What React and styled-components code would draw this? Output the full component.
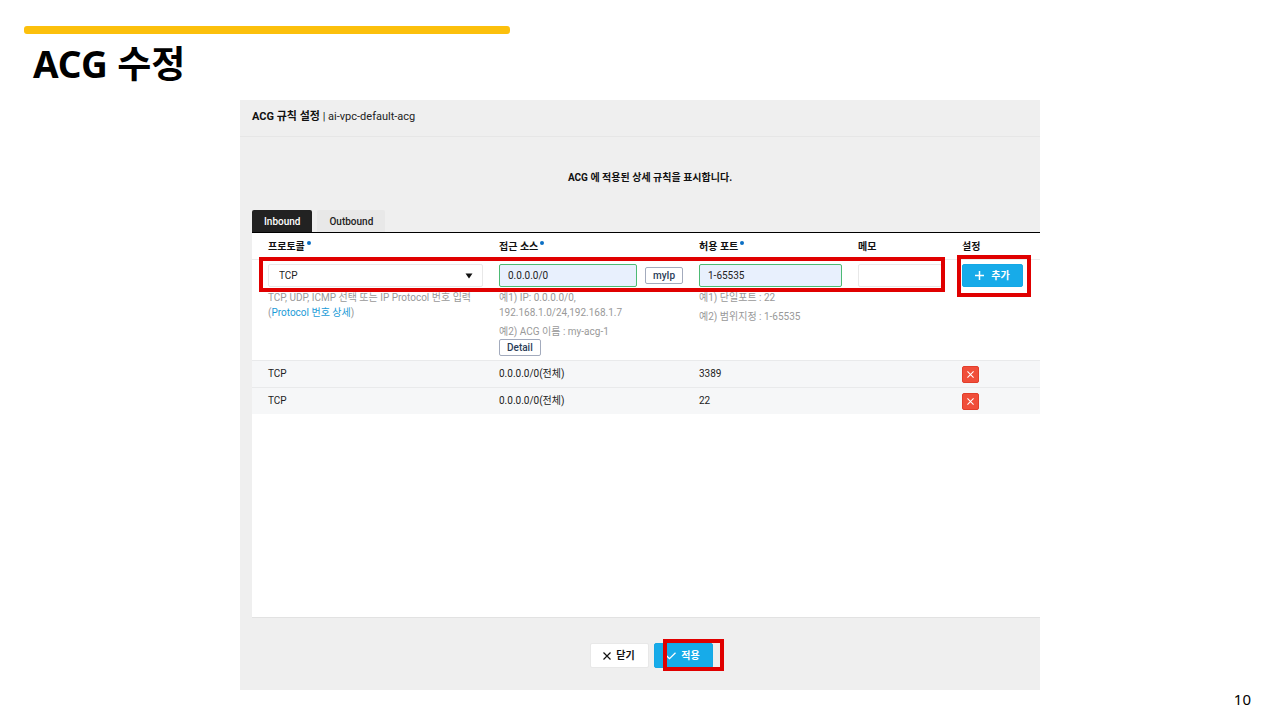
import React, { useState } from 'react';
import styled, { createGlobalStyle, css } from 'styled-components';

const GlobalStyle = createGlobalStyle`
  * {
    box-sizing: border-box;
  }

  body {
    margin: 0;
    background: #fff;
    color: #222;
    font-family: Roboto, 'Noto Sans CJK KR', sans-serif;
    font-size: 10px;
    line-height: 15px;
  }

  button,
  input,
  select {
    font: inherit;
    color: inherit;
    margin: 0;
  }
`;

const Slide = styled.main`
  display: flex;
  flex-direction: column;
  min-height: 100vh;
  padding: 26px 24px 12px;
`;

const Accent = styled.div`
  width: 38%;
  min-width: 486px;
  height: 8px;
  border-radius: 3px;
  background: #fcc00c;
`;

const SlideTitle = styled.h1`
  margin: 4px 0 0 9px;
  font-family: 'Noto Sans', 'Noto Sans CJK KR', sans-serif;
  font-size: 37px;
  font-weight: 700;
  line-height: 52px;
  color: #000;
`;

const PageNumber = styled.footer`
  margin-top: auto;
  padding-right: 5px;
  font-family: 'Noto Sans', sans-serif;
  font-size: 15px;
  line-height: 18px;
  text-align: right;
  color: #000;
`;

const Panel = styled.section`
  width: 65%;
  min-width: 800px;
  max-width: 800px;
  margin: 10px auto 0;
  background: #efefef;
`;

const PanelHeader = styled.header`
  padding: 9px 12px 11px;
  border-bottom: 1px solid #e6e6e6;
  font-size: 11px;
  line-height: 16px;
`;

const PanelTitle = styled.h2`
  display: inline;
  margin: 0;
  font-size: 11px;
  font-weight: 700;
  color: #111;
`;

const Notice = styled.p`
  margin: 0;
  padding: 33px 0 25px 20px;
  font-weight: 700;
  text-align: center;
  color: #111;
`;

const Tabs = styled.div`
  display: flex;
  gap: 5px;
  padding-left: 12px;
`;

const Tab = styled.button`
  height: 22px;
  padding: 0 12px;
  border: 0;
  border-radius: 2px 2px 0 0;
  font-weight: 500;
  background: ${props => (props.$active ? '#222' : '#e8e8e8')};
  color: ${props => (props.$active ? '#fff' : '#222')};
`;

const Rules = styled.div`
  min-height: 386px;
  margin-left: 12px;
  border-top: 1px solid #000;
  border-bottom: 1px solid #e2e2e2;
  background: #fff;
`;

const Table = styled.table`
  width: 100%;
  table-layout: fixed;
  border-collapse: separate;
  border-spacing: 0;
`;

const HeadCell = styled.th`
  width: ${props => props.$width}px;
  height: 27px;
  padding: 0 0 0 16px;
  border-bottom: 1px solid #ececec;
  font-weight: 700;
  text-align: left;
  color: #111;
`;

const Required = styled.i`
  display: inline-block;
  width: 4px;
  height: 4px;
  margin-left: 2px;
  border-radius: 50%;
  background: #0b6fc4;
  vertical-align: 5px;
`;

const FormRow = styled.tr`
  position: relative;
`;

const FormCell = styled.td`
  padding: 4px ${props => (props.$inset ? 4 : 0)}px 4px 16px;
  vertical-align: top;
`;

const FieldLine = styled.div`
  display: flex;
  align-items: center;
  gap: 8px;
  margin-bottom: 3px;
`;

const field = css`
  flex: 1;
  width: 100%;
  min-width: 0;
  height: 23px;
  border: 1px solid #e8e8e8;
  border-radius: 2px;
  background: #fff;
`;

const Input = styled.input`
  ${field}
  padding: 0 8px;
  ${props => props.$filled && css`
    border-color: #4dba74;
    background: #e8f0fd;
  `}
`;

const SelectBox = styled.div`
  position: relative;
  display: flex;
  flex: 1;
`;

const Select = styled.select`
  ${field}
  padding: 0 10px;
  appearance: none;
`;

const Caret = styled.svg`
  position: absolute;
  top: 9px;
  right: 10px;
  pointer-events: none;
`;

const OutlineButton = styled.button`
  height: 17px;
  padding: 0 7px;
  border: 1px solid #a3abbd;
  border-radius: 2px;
  background: #fff;
  font-weight: 500;
  line-height: 15px;
  color: #2b3d58;
`;

const Help = styled.p`
  margin: 0;
  color: #999;

  & + & {
    margin-top: 4px;
  }
`;

const HelpLink = styled.a`
  color: #1a9bd7;
  text-decoration: none;
`;

const RuleCell = styled.td`
  height: 27px;
  padding: 0 0 2px 16px;
  border-top: 1px solid #e9eaeb;
  background: #f6f7f8;

  &:last-child {
    padding-bottom: 0;
  }
`;

const DeleteButton = styled.button`
  display: flex;
  align-items: center;
  justify-content: center;
  width: 17px;
  height: 17px;
  padding: 0;
  border: 1px solid #e23e2b;
  border-radius: 2px;
  background: #f04e3a;
  color: #fff;
`;

const Marked = styled.div`
  position: relative;
  display: inline-flex;
`;

const Highlight = styled.span`
  position: absolute;
  border: 4px solid #e00000;
  pointer-events: none;
`;

const RowHighlight = styled(Highlight)`
  top: -3px;
  left: 7px;
  right: 95px;
  height: 35px;
`;

const AddHighlight = styled(Highlight)`
  inset: -9px -8px -10px -5px;
`;

const ApplyHighlight = styled(Highlight)`
  inset: -4px -11px -3px 9px;
`;

const ActionButton = styled.button`
  display: flex;
  align-items: center;
  justify-content: center;
  gap: 5px;
  height: 25px;
  min-width: 59px;
  padding: 0 11px;
  border: 1px solid ${props => (props.$primary ? '#14a8e6' : '#e8e8e8')};
  border-radius: 2px;
  background: ${props => (props.$primary ? '#17abe9' : '#fff')};
  color: ${props => (props.$primary ? '#fff' : '#111')};
  font-weight: 700;
`;

const AddButton = styled(ActionButton)`
  gap: 7px;
  height: 23px;
  min-width: 61px;
`;

const Actions = styled.div`
  display: flex;
  justify-content: center;
  gap: 5px;
  padding: 25px 0 22px 22px;
`;

const PlusIcon = () => (
  <svg width="9" height="9" viewBox="0 0 9 9" stroke="currentColor" strokeWidth="1.5" aria-hidden="true">
    <path d="M4.5 0v9M0 4.5h9" />
  </svg>
);

const CrossIcon = ({ size }) => (
  <svg width={size} height={size} viewBox="0 0 8 8" stroke="currentColor" strokeWidth="1.2" aria-hidden="true">
    <path d="M.5 .5l7 7M7.500 .5l-7 7" />
  </svg>
);

const CheckIcon = () => (
  <svg width="10" height="8" viewBox="0 0 10 8" fill="none" stroke="currentColor" strokeWidth="1.3" aria-hidden="true">
    <path d="M.5 3.700l3 3L9.500 .7" />
  </svg>
);

const columns = [
  { title: '프로토콜', width: 231, required: true },
  { title: '접근 소스', width: 200, required: true },
  { title: '허용 포트', width: 159, required: true },
  { title: '메모', width: 104 },
  { title: '설정', width: 94 },
];

const rules = [
  { protocol: 'TCP', source: '0.0.0.0/0(전체)', port: '3389' },
  { protocol: 'TCP', source: '0.0.0.0/0(전체)', port: '22' },
];

export default function App() {
  const [tab, setTab] = useState('Inbound');

  return (
    <Slide>
      <GlobalStyle />
      <Accent />
      <SlideTitle>ACG 수정</SlideTitle>

      <Panel>
        <PanelHeader>
          <PanelTitle>ACG 규칙 설정</PanelTitle>
          {' | ai-vpc-default-acg'}
        </PanelHeader>
        <Notice>ACG 에 적용된 상세 규칙을 표시합니다.</Notice>

        <Tabs role="tablist">
          {['Inbound', 'Outbound'].map(name => (
            <Tab
              key={name}
              type="button"
              role="tab"
              aria-selected={tab === name}
              $active={tab === name}
              onClick={() => setTab(name)}
            >
              {name}
            </Tab>
          ))}
        </Tabs>

        <Rules>
          <Table>
            <thead>
              <tr>
                {columns.map(({ title, width, required }) => (
                  <HeadCell key={title} $width={width} scope="col">
                    {title}
                    {required && <Required />}
                  </HeadCell>
                ))}
              </tr>
            </thead>
            <tbody>
              <FormRow>
                <FormCell>
                  <FieldLine>
                    <SelectBox>
                      <Select aria-label="프로토콜" defaultValue="TCP">
                        <option>TCP</option>
                        <option>UDP</option>
                        <option>ICMP</option>
                      </Select>
                      <Caret width="8" height="6" viewBox="0 0 8 6">
                        <path d="M.5 .5h7L4 5.500z" fill="#111" />
                      </Caret>
                    </SelectBox>
                  </FieldLine>
                  <Help>
                    TCP, UDP, ICMP 선택 또는 IP Protocol 번호 입력
                    <br />
                    (
                    <HelpLink href="#protocol">Protocol 번호 상세</HelpLink>
                    )
                  </Help>
                </FormCell>
                <FormCell>
                  <FieldLine>
                    <Input aria-label="접근 소스" defaultValue="0.0.0.0/0" $filled />
                    <OutlineButton type="button">myIp</OutlineButton>
                  </FieldLine>
                  <Help>
                    예1) IP: 0.0.0.0/0,
                    <br />
                    192.168.1.0/24,192.168.1.7
                  </Help>
                  <Help>예2) ACG 이름 : my-acg-1</Help>
                  <OutlineButton type="button">Detail</OutlineButton>
                </FormCell>
                <FormCell>
                  <FieldLine>
                    <Input aria-label="허용 포트" defaultValue="1-65535" $filled />
                  </FieldLine>
                  <Help>예1) 단일포트 : 22</Help>
                  <Help>예2) 범위지정 : 1-65535</Help>
                </FormCell>
                <FormCell $inset>
                  <FieldLine>
                    <Input aria-label="메모" />
                  </FieldLine>
                </FormCell>
                <FormCell>
                  <Marked>
                    <AddButton type="button" $primary>
                      <PlusIcon />
                      추가
                    </AddButton>
                    <AddHighlight />
                  </Marked>
                  <RowHighlight />
                </FormCell>
              </FormRow>
              {rules.map(rule => (
                <tr key={rule.port}>
                  <RuleCell>{rule.protocol}</RuleCell>
                  <RuleCell>{rule.source}</RuleCell>
                  <RuleCell>{rule.port}</RuleCell>
                  <RuleCell />
                  <RuleCell>
                    <DeleteButton type="button" aria-label="삭제">
                      <CrossIcon size={7} />
                    </DeleteButton>
                  </RuleCell>
                </tr>
              ))}
            </tbody>
          </Table>
        </Rules>

        <Actions>
          <ActionButton type="button">
            <CrossIcon size={8} />
            닫기
          </ActionButton>
          <Marked>
            <ActionButton type="button" $primary>
              <CheckIcon />
              적용
            </ActionButton>
            <ApplyHighlight />
          </Marked>
        </Actions>
      </Panel>

      <PageNumber>10</PageNumber>
    </Slide>
  );
}
